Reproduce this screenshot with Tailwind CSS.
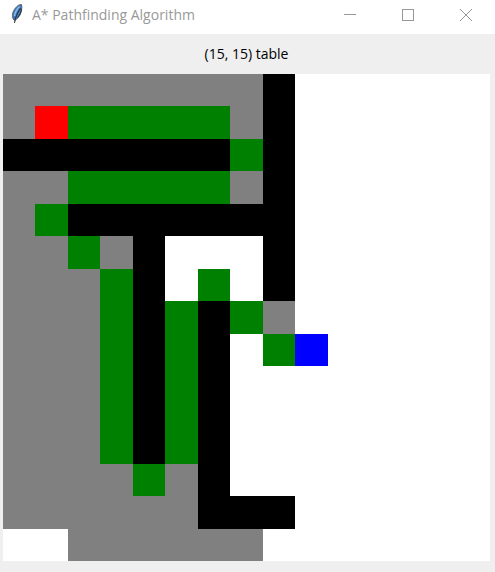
<!DOCTYPE html>
<html lang="en">
<head>
<meta charset="utf-8">
<meta name="viewport" content="width=device-width, initial-scale=1">
<title>A* Pathfinding Algorithm</title>
<script src="https://cdn.jsdelivr.net/npm/@tailwindcss/browser@4"></script>
</head>
<body class="min-h-screen flex flex-col bg-[#efefef] font-['Open_Sans','Noto_Sans',sans-serif]">
<header class="flex h-[34px] items-start bg-white text-[#999999]">
  <svg class="ml-2 mt-1 size-5 shrink-0" viewBox="0 0 20 20" aria-hidden="true">
    <path d="M5.500 15.500 C3.500 12 4.500 7.500 7.500 4 C9.500 1.500 11.500 .5 13.500 .5 C14.300 4 13.500 8 12 11 C10.500 13.500 9 15 7 16.500 Z" fill="#3b7cc4" stroke="#555" stroke-width=".9"/>
    <path d="M6.500 12 C7 8.500 9 5 11.500 2.500" fill="none" stroke="#8dbbea" stroke-width="1.500"/>
    <path d="M6.500 19 C7 14.500 9 9.500 12.500 4" fill="none" stroke="#2a2a2a" stroke-width="1"/>
    <path d="M13.300 5 C13.300 8 12 11 9.500 13.500" fill="none" stroke="#333" stroke-width="1"/>
  </svg>
  <h1 class="ml-1 grow text-sm leading-[30px] whitespace-nowrap">A* Pathfinding Algorithm</h1>
  <div class="flex">
    <button type="button" aria-label="Minimize" class="flex h-[30px] w-[58px] items-center justify-center"><svg class="size-3" viewBox="0 0 12 12" fill="none" stroke="currentColor" shape-rendering="crispEdges"><path d="M0 5.500H12"/></svg></button>
    <button type="button" aria-label="Maximize" class="flex h-[30px] w-[58px] items-center justify-center"><svg class="size-3" viewBox="0 0 12 12" fill="none" stroke="currentColor" shape-rendering="crispEdges"><rect x=".5" y=".5" width="11" height="11"/></svg></button>
    <button type="button" aria-label="Close" class="flex h-[30px] w-[58px] items-center justify-center"><svg class="size-3" viewBox="0 0 12 12" fill="none" stroke="currentColor"><path d="M0 0L12 12M12 0L0 12"/></svg></button>
  </div>
</header>
<main class="pl-[3px] pr-[5px] pb-[10px]">
  <p class="h-10 text-center text-sm leading-[40px] text-black">(15, 15) table</p>
  <div id="board" class="grid grid-cols-15 bg-white" role="img" aria-label="Pathfinding grid"></div>
</main>
<script>
  const rows = [
    'vvvvvvvvw......',
    'vspppppvw......',
    'wwwwwwwpw......',
    'vvpppppvw......',
    'vpwwwwwww......',
    'vvpvw...w......',
    'vvvpw.p.w......',
    'vvvpwpwpv......',
    'vvvpwpw.pe.....',
    'vvvpwpw........',
    'vvvpwpw........',
    'vvvpwpw........',
    'vvvvpvw........',
    'vvvvvvwww......',
    '..vvvvvv.......'
  ];
  const fills = {
    v: 'aspect-square bg-[#808080]',
    w: 'aspect-square bg-black',
    p: 'aspect-square bg-[#008000]',
    s: 'aspect-square bg-[#ff0000]',
    e: 'aspect-square bg-[#0000ff]',
    '.': 'aspect-square bg-white'
  };
  const board = document.getElementById('board');
  for (const row of rows) for (const c of row) {
    const cell = document.createElement('div');
    cell.className = fills[c];
    board.append(cell);
  }
</script>
</body>
</html>
